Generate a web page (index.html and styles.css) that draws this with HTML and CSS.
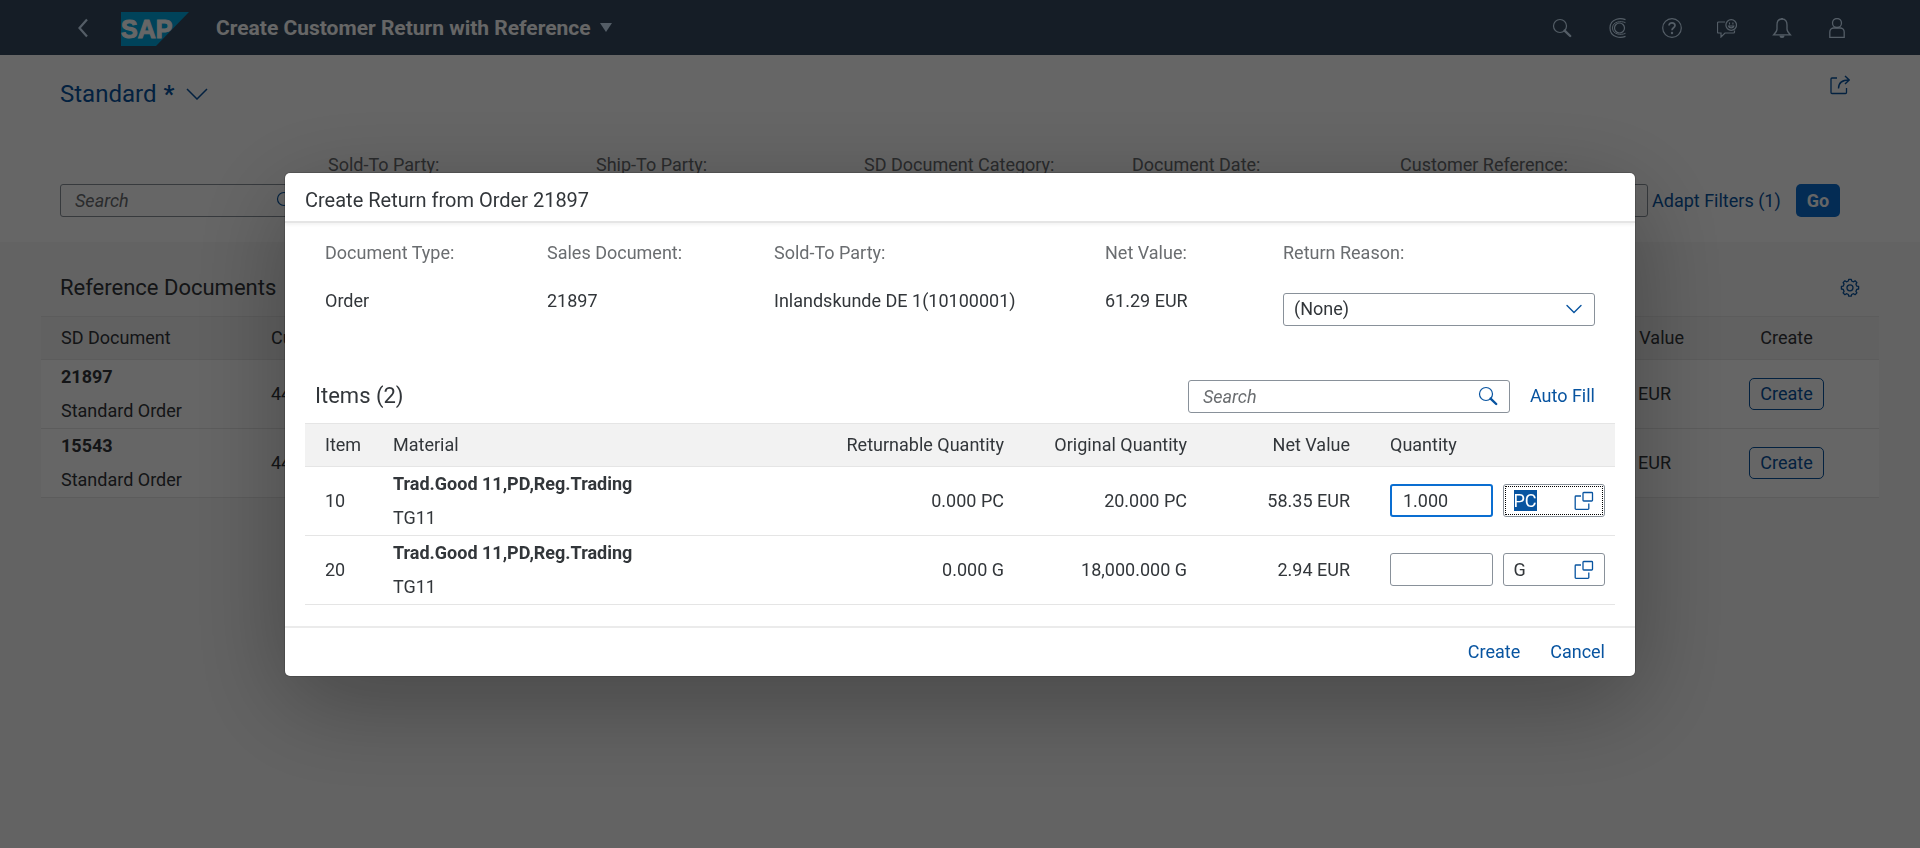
FILE: index.html
```
<!DOCTYPE html>
<html lang="en">
<head>
<meta charset="utf-8">
<title>Create Customer Return with Reference</title>
<link rel="stylesheet" href="styles.css">
</head>
<body>
<svg class="sprite" aria-hidden="true">
  <symbol id="i-search" viewBox="0 0 20 20"><circle cx="8" cy="8" r="6.5" fill="none" stroke="currentColor" stroke-width="1.2"/><path d="M12.6 12.6 18.2 18" fill="none" stroke="currentColor" stroke-width="2.4" stroke-linecap="round"/></symbol>
  <symbol id="i-down" viewBox="0 0 20 20"><path d="M3 6.500 10 13.500 17 6.500" fill="none" stroke="currentColor" stroke-width="1.400" stroke-linecap="round"/></symbol>
  <symbol id="i-value-help" viewBox="0 0 20 20"><path d="M7 5H2a.8.8 0 0 0-.8.8V17.500a.8.8 0 0 0 .8.8H14a.8.8 0 0 0 .8-.8V12.500" fill="none" stroke="currentColor" stroke-width="1.300"/><rect x="9" y="1.500" width="9.500" height="8.500" rx=".8" fill="none" stroke="currentColor" stroke-width="1.300"/></symbol>
</svg>

<header class="shell">
  <button class="shell-btn back" aria-label="Back"><svg viewBox="0 0 20 20"><path d="M14 1.500 6.500 10 14 18.500" fill="none" stroke="currentColor" stroke-width="2.200"/></svg></button>
  <svg class="logo" viewBox="0 0 68 34" role="img" aria-label="SAP"><path d="M0 0H68L35 34H0z" fill="#00a8e0"/><text class="logo-text" x="0" y="26">SAP</text></svg>
  <button class="app-title">Create Customer Return with Reference <svg viewBox="0 0 12 9"><path d="M0 0H12L6 9z" fill="currentColor"/></svg></button>
  <nav class="shell-tools">
    <button class="shell-btn" aria-label="Search"><svg><use href="#i-search"/></svg></button>
    <button class="shell-btn" aria-label="CoPilot"><svg viewBox="0 0 20 20"><path d="M18.500 1.600C15.500.5 12 .4 9.500 1.200A9.200 9.200 0 0 0 9.500 18.800C12 19.600 15.500 19.500 18.500 18.400" fill="none" stroke="currentColor" stroke-width="1.200"/><path d="M18.500 4.700C14 2.500 5.500 3.500 5.500 10S14 17.500 18.500 15.300" fill="none" stroke="currentColor"/><circle cx="12.500" cy="10" r="5" fill="none" stroke="currentColor" stroke-width="1.200"/></svg></button>
    <button class="shell-btn" aria-label="Help"><svg viewBox="0 0 20 20"><circle cx="10" cy="10" r="9.300" fill="none" stroke="currentColor" stroke-width="1.200"/><path d="M7 7.600C7 3.800 13 4 13 7.500 13 9.800 10 9.800 10 12.300" fill="none" stroke="currentColor" stroke-width="1.700"/><circle cx="10" cy="15" r="1.200" fill="currentColor"/></svg></button>
    <button class="shell-btn" aria-label="Feedback"><svg viewBox="0 0 20 20"><path d="M8 4H1.500a1 1 0 0 0-1 1v9a1 1 0 0 0 1 1H4v4l4-4h8.500a1 1 0 0 0 1-1v-1.500" fill="none" stroke="currentColor" stroke-width="1.200"/><circle cx="14.200" cy="7" r="5.300" fill="none" stroke="currentColor" stroke-width="1.200"/><path d="M11.500 8c.6 2.500 4.800 2.500 5.400 0zM12.500 4.500V6.500M15.900 4.500V6.500" fill="none" stroke="currentColor" stroke-width="1.100"/></svg></button>
    <button class="shell-btn" aria-label="Notifications"><svg viewBox="0 0 20 20"><path d="M10 1C6 1 5 4 5 7v4c0 2.500-1.500 4-3.300 5.800h16.600C16.500 15 15 13.500 15 11V7c0-3-1-6-5-6z" fill="none" stroke="currentColor" stroke-width="1.300"/><path d="M7.500 17.500h5a2.500 2.500 0 0 1-5 0zM9 0h2v1.500H9z" fill="currentColor"/></svg></button>
    <button class="shell-btn" aria-label="Profile"><svg viewBox="0 0 20 20"><circle cx="10" cy="5" r="4.500" fill="none" stroke="currentColor" stroke-width="1.300"/><path d="M2.800 19.300V14c0-2.500 2-4 4-4h6.400c2 0 4 1.500 4 4v5.300z" fill="none" stroke="currentColor" stroke-width="1.300"/></svg></button>
  </nav>
</header>

<main>
  <section class="filter-area">
    <div class="variant-bar">
      <button class="variant">Standard <b>*</b><svg viewBox="0 0 22 12"><path d="M1 1 11 11 21 1" fill="none" stroke="currentColor" stroke-width="1.500"/></svg></button>
      <button class="icon-btn" aria-label="Share"><svg viewBox="0 0 20 20"><path d="M7 3H2a1 1 0 0 0-1 1V17.500a1 1 0 0 0 1 1H15.500a1 1 0 0 0 1-1V13" fill="none" stroke="currentColor" stroke-width="1.300"/><path d="M8.500 13.500C8.500 8 12 5 19 5M15 1l4.200 4L15 9" fill="none" stroke="currentColor" stroke-width="1.400"/></svg></button>
    </div>
    <div class="filter-bar">
      <div class="filters">
        <div class="filter"><div class="field search-field"><input type="search" placeholder="Search" aria-label="Search documents"><svg><use href="#i-search"/></svg></div></div>
        <div class="filter"><label for="f1">Sold-To Party:</label><input id="f1" class="field"></div>
        <div class="filter"><label for="f2">Ship-To Party:</label><input id="f2" class="field"></div>
        <div class="filter"><label for="f3">SD Document Category:</label><input id="f3" class="field"></div>
        <div class="filter"><label for="f4">Document Date:</label><input id="f4" class="field"></div>
        <div class="filter"><label for="f5">Customer Reference:</label><input id="f5" class="field"></div>
      </div>
      <div class="filter-actions">
        <button class="link-btn">Adapt Filters (1)</button>
        <button class="go">Go</button>
      </div>
    </div>
  </section>

  <section class="documents">
    <div class="documents-bar">
      <h2>Reference Documents</h2>
      <button class="icon-btn" aria-label="Settings"><svg viewBox="0 0 20 20"><path d="M8.400 2.400 8.700.7h2.600l.3 1.700 2 .8 1.500-1 1.800 1.800-1 1.500.8 2 1.900.3v2.600l-1.900.4-.8 2 1 1.500-1.800 1.800-1.500-1-2 .8-.3 1.700H8.700l-.3-1.700-2-.8-1.500 1-1.800-1.800 1-1.500-.8-2-1.900-.4V7.800l1.900-.3.8-2-1-1.500 1.800-1.800 1.500 1z" transform="translate(0 .6)" fill="none" stroke="currentColor" stroke-width="1.300" stroke-linejoin="round"/><circle cx="10" cy="9.800" r="3" fill="none" stroke="currentColor" stroke-width="1.300"/></svg></button>
    </div>
    <table class="grid docs-table">
      <colgroup><col class="c-doc"><col><col class="c-value"><col class="c-create"></colgroup>
      <thead><tr><th>SD Document</th><th>Customer</th><th class="num">Net Value</th><th class="center">Create</th></tr></thead>
      <tbody>
        <tr><td><div class="stack"><b>21897</b><span>Standard Order</span></div></td><td>44</td><td class="num amount">61.29 EUR</td><td class="center"><button class="outline-btn">Create</button></td></tr>
        <tr><td><div class="stack"><b>15543</b><span>Standard Order</span></div></td><td>44</td><td class="num amount">61.29 EUR</td><td class="center"><button class="outline-btn">Create</button></td></tr>
      </tbody>
    </table>
  </section>
</main>

<div class="overlay">
  <section class="dialog" role="dialog" aria-modal="true" aria-labelledby="dlg-title">
    <header class="dialog-head"><h1 id="dlg-title">Create Return from Order 21897</h1></header>
    <div class="dialog-body">
      <div class="details">
        <div class="detail"><span class="label">Document Type:</span><span>Order</span></div>
        <div class="detail"><span class="label">Sales Document:</span><span>21897</span></div>
        <div class="detail"><span class="label">Sold-To Party:</span><span>Inlandskunde DE 1(10100001)</span></div>
        <div class="detail"><span class="label">Net Value:</span><span>61.29 EUR</span></div>
        <div class="detail"><label class="label" for="reason">Return Reason:</label>
          <div class="field select-field"><select id="reason"><option>(None)</option></select><svg><use href="#i-down"/></svg></div></div>
      </div>
      <div class="items-bar">
        <h2>Items (2)</h2>
        <div class="field search-field items-search"><input type="search" placeholder="Search" aria-label="Search items"><svg><use href="#i-search"/></svg></div>
        <button class="link-btn">Auto Fill</button>
      </div>
      <table class="grid items-table">
        <colgroup><col class="c-item"><col><col class="c-returnable"><col class="c-original"><col class="c-net"><col class="c-qty"></colgroup>
        <thead><tr><th>Item</th><th>Material</th><th class="num">Returnable Quantity</th><th class="num">Original Quantity</th><th class="num">Net Value</th><th class="qty">Quantity</th></tr></thead>
        <tbody>
          <tr><td>10</td><td><div class="stack"><b>Trad.Good 11,PD,Reg.Trading</b><span>TG11</span></div></td><td class="num">0.000 PC</td><td class="num">20.000 PC</td><td class="num">58.35 EUR</td>
            <td class="qty"><div class="qty-row"><input class="field active" value="1.000" aria-label="Quantity, item 10"><div class="field unit focused"><input id="unit10" value="PC" aria-label="Unit, item 10"><button aria-label="Unit value help"><svg><use href="#i-value-help"/></svg></button></div></div></td></tr>
          <tr><td>20</td><td><div class="stack"><b>Trad.Good 11,PD,Reg.Trading</b><span>TG11</span></div></td><td class="num">0.000 G</td><td class="num">18,000.000 G</td><td class="num">2.94 EUR</td>
            <td class="qty"><div class="qty-row"><input class="field" aria-label="Quantity, item 20"><div class="field unit"><input value="G" aria-label="Unit, item 20"><button aria-label="Unit value help"><svg><use href="#i-value-help"/></svg></button></div></div></td></tr>
        </tbody>
      </table>
    </div>
    <footer class="dialog-foot"><button class="link-btn">Create</button><button class="link-btn">Cancel</button></footer>
  </section>
</div>
<script src="script.js"></script>
</body>
</html>
```
FILE: styles.css
```
* { box-sizing: border-box; }
html, body { height: 100%; }
body {
  margin: 0;
  background: #f7f7f7;
  color: #32363a;
  font: 18px/24px Roboto, "Liberation Sans", sans-serif;
  overflow: hidden;
}
h1, h2 { margin: 0; font-weight: 400; }
b { font-weight: 700; }
button, input, select { font: inherit; color: inherit; margin: 0; }
button { border: 0; padding: 0; background: none; cursor: pointer; }
.sprite { display: none; }

.shell { display: flex; align-items: center; height: 55px; padding: 0 66px 0 72px; background: #354a5f; color: #fff; }
.shell-btn { display: flex; justify-content: center; align-items: center; width: 35px; height: 35px; color: #d1e8ff; }
.shell-btn svg { width: 20px; height: 20px; }
.back { width: 22px; margin-right: 27px; }
.logo { width: 68px; height: 34px; margin-top: 3px; }
.logo-text { font: 700 25px "Liberation Sans", Arial, sans-serif; fill: #fff; stroke: #fff; stroke-width: 1px; }
.app-title { display: flex; align-items: center; gap: 9px; margin-left: 27px; font-size: 21px; font-weight: 700; }
.app-title svg { width: 12px; height: 9px; color: #d1e8ff; }
.shell-tools { display: flex; gap: 20px; margin-left: auto; }

.filter-area { background: #fff; padding-bottom: 25px; }
.variant-bar { display: flex; justify-content: space-between; align-items: flex-start; padding: 20px 70px 41px 60px; color: #0854a0; }
.variant { display: flex; align-items: center; gap: 7px; height: 37px; font-size: 24px; }
.variant svg { width: 22px; height: 12px; margin-left: 5px; }
.icon-btn { display: flex; color: #0854a0; }
.icon-btn svg { width: 20px; height: 20px; }
.filter-bar { display: flex; align-items: flex-end; padding: 0 80px 0 60px; }
.filters { display: grid; grid-template-columns: repeat(6, 1fr); gap: 20px; flex: 1; align-items: end; }
.filter { display: flex; flex-direction: column; gap: 7px; min-width: 0; color: #6a6d70; }
.filter-actions { display: flex; justify-content: space-between; flex: 0 0 192px; padding-left: 4px; }
.link-btn { color: #0854a0; white-space: nowrap; }
.go { width: 44px; height: 33px; border-radius: 5px; background: #0a6ed1; color: #fff; font-weight: 700; }

.field { display: flex; align-items: center; width: 100%; height: 33px; border: 1px solid #89919a; border-radius: 3px; background: #fff; padding: 0 12px; outline: 0; }
.field input, .field select { flex: 1; min-width: 0; width: 0; height: 100%; border: 0; padding: 0; background: none; outline: 0; appearance: none; }
.field svg { flex: none; width: 20px; height: 20px; color: #0854a0; }
.search-field { padding: 0 11px 0 14px; }
.search-field ::placeholder { color: #6a6d70; font-style: italic; opacity: 1; }

.documents-bar { display: flex; justify-content: space-between; align-items: center; padding: 32px 60px 14px; }
.documents-bar h2 { font-size: 22px; line-height: 28px; }
.docs-table { width: calc(100% - 82px); margin: 0 41px; }
.grid { table-layout: fixed; border-spacing: 0; border-collapse: separate; }
.grid th { height: 44px; padding: 0 10px; background: #f2f2f2; border: solid #e5e5e5; border-width: 1px 0; font-weight: 400; text-align: left; white-space: nowrap; }
.grid td { height: 69px; padding: 0 10px; background: #fff; border-bottom: 1px solid #e5e5e5; }
.grid th:first-child, .grid td:first-child { padding-left: 20px; }
.grid .num { text-align: right; }
.grid .center { text-align: center; }
.docs-table td.amount { padding-right: 23px; }
.stack { display: flex; flex-direction: column; gap: 10px; white-space: nowrap; }
.c-doc { width: 220px; }
.c-value { width: 200px; }
.c-create { width: 185px; }
.outline-btn { height: 32px; padding: 0 10px; border: 1px solid #0854a0; border-radius: 5px; color: #0854a0; }

.overlay { position: fixed; inset: 0; display: flex; align-items: center; justify-content: center; background: rgba(0, 0, 0, .6); }
.dialog { width: 90%; max-width: 1350px; background: #fff; border-radius: 5px; box-shadow: 0 0 0 1px rgba(0, 0, 0, .15), 0 25px 100px rgba(0, 0, 0, .3); }
.dialog-head { height: 50px; padding: 4px 20px 0; border-bottom: 2px solid #e5e5e5; box-shadow: 0 2px 3px rgba(0, 0, 0, .05); }
.dialog-head h1 { font-size: 20px; line-height: 46px; }
.dialog-body { padding: 18px 20px 21px; }
.details { display: grid; grid-template-columns: 222fr 227fr 331fr 178fr 312fr; padding: 0 20px; }
.detail { display: flex; flex-direction: column; gap: 24px; min-width: 0; white-space: nowrap; }
.label { color: #6a6d70; }
.select-field { margin-top: 4px; padding: 0 10px; }
.items-bar { display: flex; align-items: center; padding: 0 20px 0 10px; margin: 54px 0 10px; }
.items-bar h2 { font-size: 22px; margin-right: auto; }
.items-search { flex: 0 1 322px; margin-right: 20px; }
.items-table { width: 100%; }
.c-item { width: 78px; }
.c-returnable { width: 200px; }
.c-original { width: 183px; }
.c-net { width: 163px; }
.c-qty { width: 255px; }
.grid th.qty, .grid td.qty { padding-left: 30px; }
.qty-row { display: grid; grid-template-columns: 1fr 1fr; gap: 10px; }
.field.active { border: 2px solid #0a6ed1; padding-left: 11px; }
.unit { padding: 0 10px; }
.unit button { display: flex; }
.unit.focused { outline: 1px dotted #000; outline-offset: -3px; }
.unit ::selection { background: #0854a0; color: #fff; }
.dialog-foot { display: flex; justify-content: flex-end; align-items: center; gap: 30px; height: 50px; padding: 0 30px; border-top: 2px solid #ebebeb; }
```
FILE: script.js
```
const unit = document.getElementById("unit10");
unit.focus();
unit.select();
```
